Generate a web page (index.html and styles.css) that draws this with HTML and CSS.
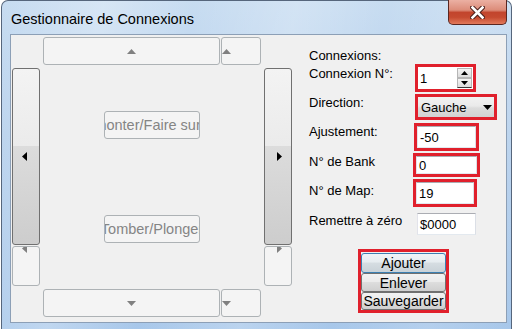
FILE: index.html
```html
<!DOCTYPE html>
<html lang="fr">
<head>
<meta charset="utf-8">
<title>Gestionnaire de Connexions</title>
<link rel="stylesheet" href="styles.css">
</head>
<body>
<div class="win">
  <div class="titlebar">
    <span class="title">Gestionnaire de Connexions</span>
    <div class="close">
      <svg width="15" height="13" viewBox="0 0 15 13"><path d="M2.5 1.5 L12.5 11.5 M12.5 1.5 L2.5 11.5" stroke="#4a1f1a" stroke-width="4.6" stroke-linecap="square"/><path d="M2.5 1.5 L12.5 11.5 M12.5 1.5 L2.5 11.5" stroke="#ffffff" stroke-width="2.6" stroke-linecap="square"/></svg>
    </div>
  </div>
  <div class="client">
    <div class="nav">
      <div></div>
      <div class="hbar">
        <div class="dis hseg-main"><svg width="9" height="5" viewBox="0 0 9 5"><path d="M0 5 L4.5 0 L9 5Z" fill="#808080"/></svg></div>
        <div class="dis hseg-end"><svg width="9" height="5" viewBox="0 0 9 5"><path d="M0 5 L4.5 0 L9 5Z" fill="#808080"/></svg></div>
      </div>
      <div></div>
      <div class="vbar vbar-left">
        <div class="thumb"><svg width="5" height="9" viewBox="0 0 5 9"><path d="M5 0 L0 4.5 L5 9Z" fill="#000"/></svg></div>
        <div class="dis vseg-end"><svg width="5" height="9" viewBox="0 0 5 9"><path d="M5 0 L0 4.5 L5 9Z" fill="#808080"/></svg></div>
      </div>
      <div class="center">
        <div class="dbtn"><span>Remonter/Faire surface</span></div>
        <div class="dbtn"><span>Tomber/Plonger</span></div>
      </div>
      <div class="vbar vbar-right">
        <div class="thumb"><svg width="5" height="9" viewBox="0 0 5 9"><path d="M0 0 L5 4.5 L0 9Z" fill="#000"/></svg></div>
        <div class="dis vseg-end"><svg width="5" height="9" viewBox="0 0 5 9"><path d="M0 0 L5 4.5 L0 9Z" fill="#808080"/></svg></div>
      </div>
      <div></div>
      <div class="hbar">
        <div class="dis hseg-main"><svg width="9" height="5" viewBox="0 0 9 5"><path d="M0 0 L9 0 L4.5 5Z" fill="#808080"/></svg></div>
        <div class="dis hseg-end"><svg width="9" height="5" viewBox="0 0 9 5"><path d="M0 0 L9 0 L4.5 5Z" fill="#808080"/></svg></div>
      </div>
      <div></div>
    </div>

    <div class="form">
      <div class="row row-head"><span class="lbl">Connexions:</span></div>
      <div class="row row-spin">
        <span class="lbl lbl-p2">Connexion N°:</span>
        <div class="mark mark-spin">
          <div class="field field-spin">
            <span class="val">1</span>
            <div class="spin">
              <div class="spin-btn"><svg width="7" height="4" viewBox="0 0 7 4"><path d="M0 4 L3.5 0 L7 4Z" fill="#000"/></svg></div>
              <div class="spin-btn spin-down"><svg width="7" height="4" viewBox="0 0 7 4"><path d="M0 0 L7 0 L3.5 4Z" fill="#000"/></svg></div>
            </div>
          </div>
        </div>
      </div>
      <div class="row row-dir">
        <span class="lbl lbl-p1">Direction:</span>
        <div class="mark mark-combo">
          <div class="combo"><span>Gauche</span><svg width="9" height="5" viewBox="0 0 9 5"><path d="M0 0 L9 0 L4.5 5Z" fill="#000"/></svg></div>
        </div>
      </div>
      <div class="row row-aj">
        <span class="lbl lbl-p1">Ajustement:</span>
        <div class="mark mark-aj"><div class="field">-50</div></div>
      </div>
      <div class="row row-bank">
        <span class="lbl lbl-p1">N° de Bank</span>
        <div class="mark mark-bank"><div class="field">0</div></div>
      </div>
      <div class="row row-map">
        <span class="lbl lbl-p4">N° de Map:</span>
        <div class="mark mark-map"><div class="field">19</div></div>
      </div>
      <div class="row row-reset">
        <span class="lbl">Remettre à zéro</span>
        <div class="field field-plain">$0000</div>
      </div>
      <div class="row row-btns">
        <div class="mark mark-btns">
          <div class="btn btn-default btn-h20">Ajouter</div>
          <div class="btn btn-h19">Enlever</div>
          <div class="btn btn-h18">Sauvegarder</div>
        </div>
      </div>
    </div>
  </div>
</div>
</body>
</html>
```

FILE: styles.css
```css
* { box-sizing: border-box; }
html, body { margin: 0; padding: 0; }
body {
  width: 515px;
  height: 329px;
  overflow: hidden;
  background: #ffffff;
  font-family: "Liberation Sans", Arial, sans-serif;
  font-size: 13px;
  color: #000;
}

.win {
  margin-left: 1px;
  width: 511px;
  height: 331px;
  border: 1px solid #56667c;
  border-bottom: none;
  border-radius: 7px 7px 0 0;
  padding: 0 4px 0 8px;
  display: flex;
  flex-direction: column;
  background:
    linear-gradient(100deg, rgba(255,255,255,0) 0%, rgba(255,255,255,.28) 18%, rgba(255,255,255,0) 34%, rgba(255,255,255,.22) 52%, rgba(255,255,255,0) 68%, rgba(255,255,255,.15) 85%, rgba(255,255,255,0) 100%),
    linear-gradient(180deg, #c7dcf1 0%, #b9d2ed 40%, #a7c7ea 100%);
}

.titlebar {
  height: 33px;
  flex: 0 0 33px;
  display: flex;
  align-items: flex-start;
  justify-content: space-between;
}
.title {
  margin-top: 10px;
  padding-left: 1px;
  font-size: 14.5px;
  line-height: 17px;
  color: #000;
}
.close {
  margin-top: -1px;
  width: 59px;
  height: 25px;
  border: 1px solid #5a2620;
  border-top: none;
  border-radius: 0 0 5px 5px;
  display: flex;
  align-items: center;
  justify-content: center;
  background: linear-gradient(180deg, #ebb0a3 0%, #dc8c79 42%, #c2452d 52%, #c54a30 72%, #e2795b 100%);
}

.client {
  flex: 0 0 289px;
  border: 1px solid #8c9fb6;
  background: #f0f0f0;
  display: flex;
  align-items: flex-start;
  padding: 2px 0 0 1px;
}

/* left navigation pad */
.nav {
  display: grid;
  grid-template-columns: 28px 218px 28px;
  grid-template-rows: 28px 218px 28px;
  gap: 3px;
}
.dis {
  border: 1px solid #adb2b5;
  border-radius: 3px;
  background: #f4f4f4;
  overflow: hidden;
  display: flex;
}
.hbar { display: flex; gap: 1px; }
.hseg-main { width: 177px; align-items: center; justify-content: center; }
.hseg-end { width: 40px; align-items: center; padding-left: 0; }

.vbar { display: flex; flex-direction: column; gap: 1px; }
.thumb {
  height: 177px;
  border: 1px solid #707070;
  border-radius: 3px;
  background: linear-gradient(180deg, #f3f3f3 0%, #ebebeb 44%, #dcdcdc 44%, #cdcdcd 100%);
  display: flex;
  align-items: center;
  justify-content: center;
}
.vseg-end { height: 40px; justify-content: center; align-items: flex-start; }
.vseg-end svg { margin-top: -3px; }
.vbar-left .thumb, .vbar-left .vseg-end { padding-right: 4px; }
.vbar-right .thumb, .vbar-right .vseg-end { padding-left: 3px; }

.center {
  display: flex;
  flex-direction: column;
  align-items: center;
  padding-top: 43px;
  gap: 76px;
}
.dbtn {
  width: 96px;
  height: 28px;
  border: 1px solid #adb2b5;
  border-radius: 3px;
  background: #f4f4f4;
  color: #858585;
  font-size: 14.5px;
  white-space: nowrap;
  overflow: hidden;
  display: flex;
  align-items: center;
  justify-content: center;
}
.dbtn span { flex-shrink: 0; }

/* right form */
.form {
  margin-left: 17px;
  margin-top: 11px;
  display: flex;
  flex-direction: column;
}
.row { display: flex; align-items: flex-start; }
.lbl { width: 105px; line-height: 16px; white-space: nowrap; }
.lbl-p1 { padding-top: 1px; }
.lbl-p2 { padding-top: 2px; }
.lbl-p4 { padding-top: 4px; }

.row-head { height: 16px; }
.row-dir { margin-top: 2px; }
.row-aj { margin-top: 3px; }
.row-bank { margin-top: 2px; }
.row-map { margin-top: 2px; }
.row-reset { margin-top: 6px; }
.row-btns { margin-top: 14px; padding-left: 49px; }

.mark { border: 3px solid #e0202c; }
.mark-spin { width: 61px; height: 28px; margin-left: 1px; }
.mark-combo { width: 82px; height: 26px; margin-left: 1px; }
.mark-aj { width: 65px; height: 28px; }
.mark-bank { width: 67px; height: 24px; margin-left: -1px; }
.mark-map { width: 64px; height: 28px; margin-left: -1px; }

.field {
  height: 100%;
  background: #fff;
  border: 1px solid;
  border-color: #abadb3 #dbdfe6 #e3e9ef #e2e3ea;
  padding-left: 2px;
  display: flex;
  align-items: center;
}
.field-spin { border-color: #fff; padding-left: 1px; }
.val { flex: 1; }
.spin {
  width: 15px;
  height: 20px;
  display: flex;
  flex-direction: column;
}
.spin-btn {
  flex: 1;
  border: 1px solid #b6b6b6;
  background: linear-gradient(180deg, #f4f4f4, #dcdcdc);
  display: flex;
  align-items: center;
  justify-content: center;
}
.spin-down { border-bottom: 1px solid #3a3a3a; }

.combo {
  height: 100%;
  background: linear-gradient(180deg, #f2f2f2 0%, #eaeaea 45%, #dcdcdc 55%, #d2d2d2 100%);
  display: flex;
  align-items: center;
  justify-content: space-between;
  padding: 0 2px 0 3px;
}

.field-plain { width: 59px; height: 22px; margin-left: 3px; }

.mark-btns {
  width: 91px;
  height: 64px;
  padding-top: 1px;
  display: flex;
  flex-direction: column;
}
.btn {
  border: 1px solid #707070;
  border-radius: 3px;
  background: linear-gradient(180deg, #f2f2f2 0%, #ebebeb 45%, #dddddd 50%, #cfcfcf 100%);
  font-size: 14px;
  line-height: 1;
  display: flex;
  align-items: center;
  justify-content: center;
}
.btn-default { border-color: #3c7fb1; background: linear-gradient(180deg, #f0f4f7 0%, #e6ecf0 45%, #d6dde2 50%, #c9d2d8 100%); }
.btn-h20 { height: 20px; }
.btn-h19 { height: 19px; }
.btn-h18 { height: 18px; }
```
